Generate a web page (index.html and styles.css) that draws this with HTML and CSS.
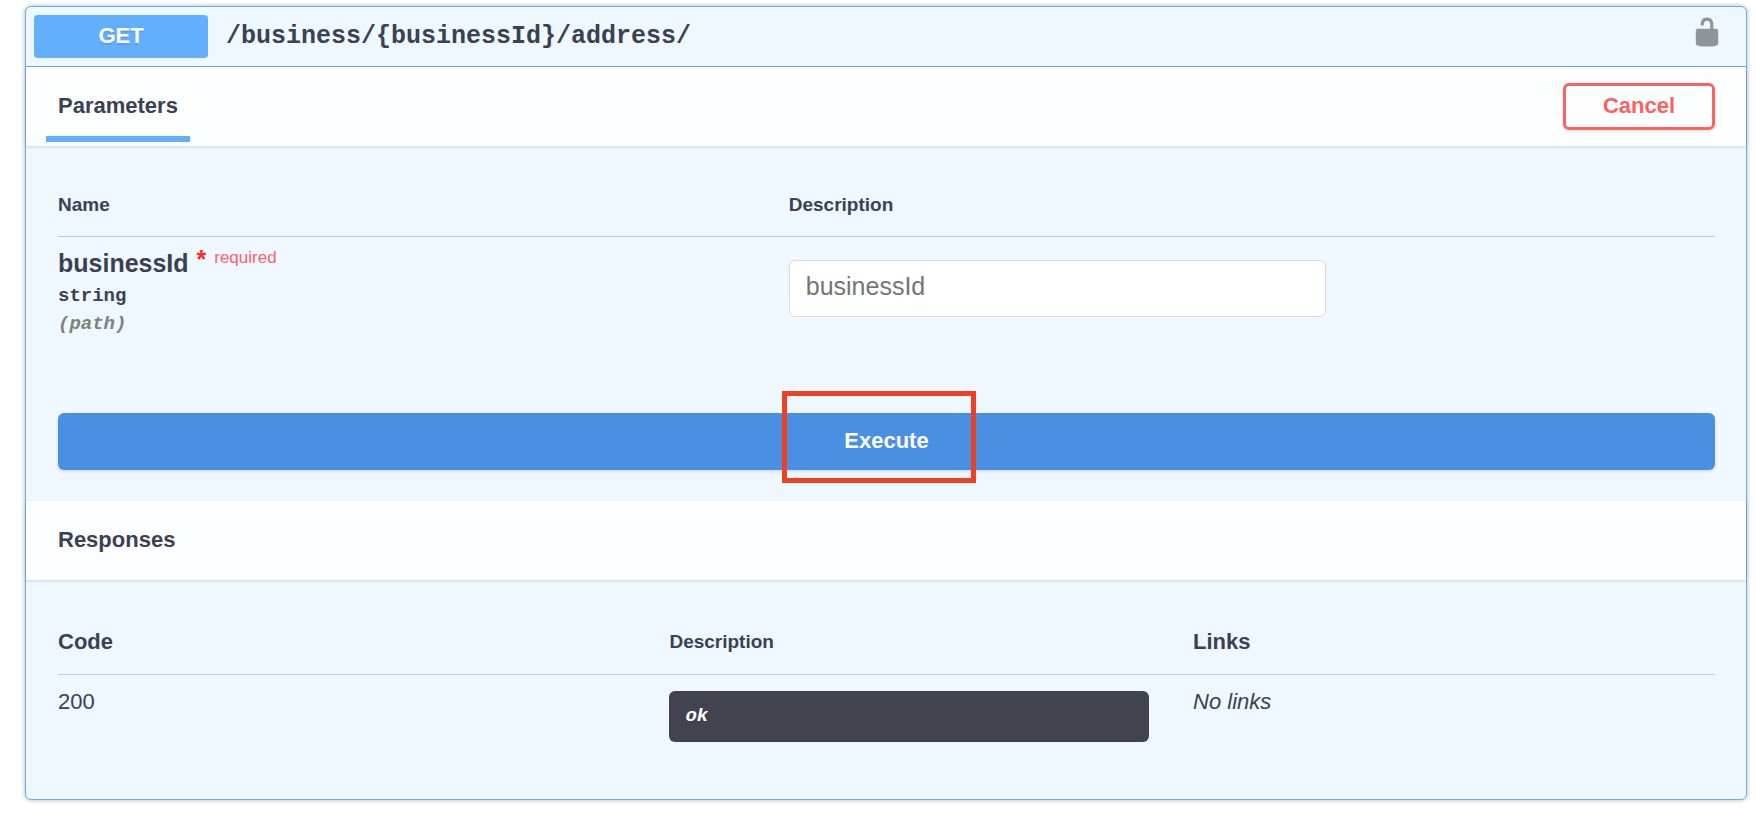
FILE: index.html
```html
<!DOCTYPE html>
<html lang="en">
<head>
<meta charset="utf-8">
<title>GET /business/{businessId}/address/</title>
<link rel="stylesheet" href="styles.css">
</head>
<body>
<main class="operation">
  <header class="summary">
    <button class="method" type="button">GET</button>
    <span class="path">/business/{businessId}/address/</span>
    <button class="auth" type="button" aria-label="Authorize">
      <svg class="auth-icon" viewBox="0 0 20 20" aria-hidden="true"><path d="M15.8 8H14V5.6C14 2.703 12.665 1 10 1 7.334 1 6 2.703 6 5.6V6h2v-.801C8 3.754 8.797 3 10 3c1.203 0 2 .754 2 2.199V8H4c-.553 0-1 .646-1 1.199V17c0 .549.428 1.139.951 1.307l1.197.387C5.672 18.861 6.55 19 7.1 19h5.8c.549 0 1.428-.139 1.951-.307l1.196-.387c.524-.167.953-.757.953-1.306V9.199C17 8.646 16.352 8 15.8 8z"/></svg>
    </button>
  </header>

  <section>
    <div class="section-header section-header-tabs">
      <h2 class="section-title tab">Parameters</h2>
      <button class="cancel" type="button">Cancel</button>
    </div>
    <div class="section-body parameters">
      <table class="table">
        <thead>
          <tr><th class="col-name">Name</th><th>Description</th></tr>
        </thead>
        <tbody>
          <tr>
            <td>
              <label class="param-name" for="business-id">businessId <span class="star">*</span> <span class="required">required</span></label>
              <div class="param-type">string</div>
              <div class="param-in">(path)</div>
            </td>
            <td><input class="param-input" id="business-id" type="text" placeholder="businessId"></td>
          </tr>
        </tbody>
      </table>
      <div class="execute-row">
        <button class="execute" type="button">Execute</button>
        <div class="highlight"></div>
      </div>
    </div>
  </section>

  <section>
    <div class="section-header">
      <h2 class="section-title">Responses</h2>
    </div>
    <div class="section-body responses">
      <table class="table">
        <thead>
          <tr><th class="col-code large">Code</th><th class="col-description">Description</th><th class="large">Links</th></tr>
        </thead>
        <tbody>
          <tr>
            <td class="response-cell">200</td>
            <td class="response-cell"><div class="response-text">ok</div></td>
            <td class="response-cell"><i>No links</i></td>
          </tr>
        </tbody>
      </table>
    </div>
  </section>
</main>
</body>
</html>
```
FILE: styles.css
```css
* {
  box-sizing: border-box;
}

body {
  margin: 0;
  padding: 6px 9px 30px 25px;
  background: #fff;
  color: #3b4151;
  font-family: "Liberation Sans", Arial, sans-serif;
  font-size: 22px;
  line-height: 25px;
}

button,
input {
  font-family: inherit;
}

button {
  cursor: pointer;
}

.operation {
  border: 1px solid #61affe;
  border-radius: 6px;
  background: #eff7ff;
  box-shadow: 0 0 5px rgba(0, 0, 0, 0.3);
}

.summary {
  display: flex;
  align-items: center;
  padding: 8px 23px 8px 8px;
  border-bottom: 1px solid #61affe;
}

.method {
  width: 174px;
  padding: 8px 0 10px;
  border: 0;
  border-radius: 4px;
  background: #61affe;
  color: #fff;
  font-size: 22px;
  font-weight: 700;
  line-height: 25px;
  text-shadow: 0 2px 0 rgba(0, 0, 0, 0.1);
}

.path {
  flex: 1;
  padding: 0 18px;
  font-family: "Liberation Mono", "Courier New", monospace;
  font-size: 25px;
  font-weight: 700;
  line-height: 28px;
}

.auth {
  display: flex;
  padding: 0 0 9px;
  border: 0;
  background: none;
}

.auth-icon {
  width: 32px;
  height: 32px;
  fill: #8f9599;
}

.section-header {
  padding: 26px 32px 28px;
  background: rgba(255, 255, 255, 0.8);
  box-shadow: 0 1px 3px rgba(0, 0, 0, 0.15);
}

.section-header-tabs {
  display: flex;
  align-items: flex-start;
  justify-content: space-between;
  padding: 16px 31px 4px 20px;
}

.section-title {
  margin: 0;
  font-size: 22px;
  line-height: 25px;
}

.tab {
  padding: 10px 12px 18px;
  border-bottom: 6px solid #61affe;
}

.cancel {
  width: 152px;
  padding: 7px 0 9px;
  border: 3px solid #ff6060;
  border-radius: 6px;
  background: transparent;
  color: #ff6060;
  font-size: 22px;
  font-weight: 700;
  line-height: 25px;
  box-shadow: 0 2px 3px rgba(0, 0, 0, 0.1);
}

.section-body {
  padding: 32px 31px 31px 32px;
}

.responses {
  padding-top: 33px;
  padding-bottom: 57px;
}

.table {
  width: 100%;
  border-collapse: collapse;
  table-layout: fixed;
}

.table th {
  padding: 16px 0 20px;
  border-bottom: 1px solid #c5cddb;
  font-size: 19px;
  line-height: 22px;
  text-align: left;
}

.table .large {
  font-size: 22px;
  line-height: 25px;
}

.table td {
  padding: 12px 0;
  vertical-align: top;
}

.col-name {
  width: 44.1%;
}

.col-code {
  width: 36.9%;
}

.col-description {
  width: 31.6%;
}

.param-name {
  display: block;
  font-size: 25px;
  font-weight: 700;
  line-height: 28px;
}

.star {
  padding: 0 1px;
  color: #ff2a1c;
  line-height: 0;
  vertical-align: 4px;
}

.required {
  color: #ff6068;
  font-size: 17px;
  font-weight: 400;
  line-height: 0;
  vertical-align: super;
}

.param-type,
.param-in {
  font-family: "Liberation Mono", "Courier New", monospace;
  font-size: 19px;
  font-weight: 700;
  line-height: 22px;
}

.param-type {
  padding-top: 8px;
}

.param-in {
  padding-top: 6px;
  color: #808080;
  font-style: italic;
}

.param-input {
  display: block;
  width: 58%;
  margin-top: 11px;
  padding: 12px 16px 16px;
  border: 1px solid #d9d9d9;
  border-radius: 6px;
  background: #fff;
  color: #3b4151;
  font-size: 25px;
  line-height: 27px;
}

.param-input::placeholder {
  color: #757575;
}

.execute-row {
  position: relative;
  margin-top: 66px;
}

.execute {
  display: block;
  width: 100%;
  padding: 15px 0 17px;
  border: 0;
  border-radius: 6px;
  background: #4990e2;
  color: #fff;
  font-size: 22px;
  font-weight: 700;
  line-height: 25px;
  box-shadow: 0 2px 3px rgba(0, 0, 0, 0.1);
}

.highlight {
  position: absolute;
  top: -22px;
  left: 43.7%;
  width: 194px;
  height: 92px;
  border: 5px solid #ee4023;
  pointer-events: none;
}

.table .response-cell {
  padding: 14px 0 0;
}

.response-text {
  width: 480px;
  max-width: 92%;
  margin-top: 2px;
  padding: 14px 16px 15px;
  border-radius: 6px;
  background: #41444e;
  color: #fff;
  font-family: "Liberation Mono", "Courier New", monospace;
  font-size: 19px;
  font-style: italic;
  font-weight: 700;
  line-height: 22px;
}
```
